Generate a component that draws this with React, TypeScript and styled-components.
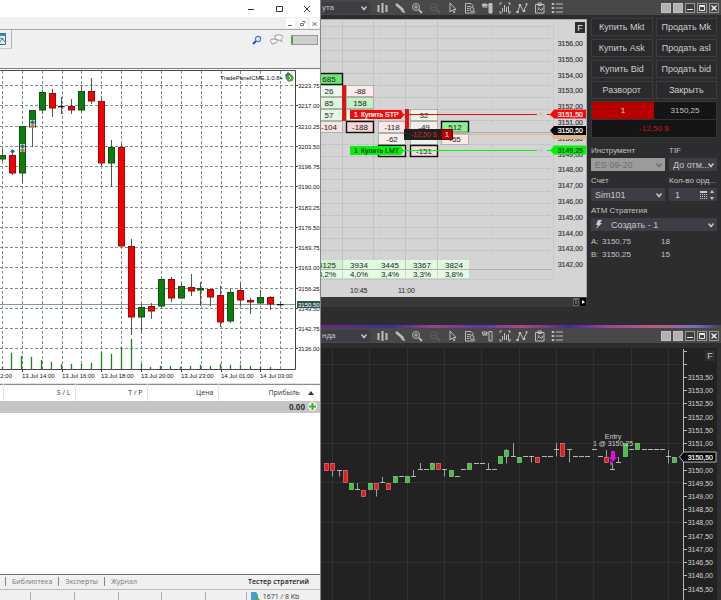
import React from "react";
import styled, { createGlobalStyle } from "styled-components";

const GlobalStyle = createGlobalStyle`
  *, *::before, *::after { box-sizing: border-box; }
  body { margin: 0; background: #2d2d2f; font-family: "Liberation Sans", Arial, sans-serif; }
  button, select, input { font: inherit; color: inherit; margin: 0; padding: 0; border: 0; border-radius: 0; }
  svg { display: block; }
`;

const Desktop = styled.main`
  display: grid;
  grid-template-columns: minmax(0, 321fr) minmax(0, 400fr);
  min-height: 100vh;
`;

/* ---------- Light terminal ---------- */

const Terminal = styled.section`
  display: flex;
  flex-direction: column;
  min-width: 0;
  background: #fff;
  border-right: 1px solid #85878a;
  font: 7px/12px "Open Sans", "Noto Sans", sans-serif;
  color: #333;
`;

const TitleBar = styled.header`
  display: flex;
  justify-content: flex-end;
  gap: 16px;
  height: 17px;
  padding: 1px 7px 0 0;
`;

const CaptionButton = styled.button`
  display: grid;
  place-items: center;
  width: 12px;
  background: none;
`;

const MenuBar = styled.div`
  display: flex;
  justify-content: flex-end;
  gap: 3px;
  height: 13px;
  padding: 1px 1px 1px 0;
  background: #f0f0f0;
  border-bottom: 1px solid #a8a8a8;
`;

const ChildButton = styled.button`
  display: grid;
  place-items: center;
  width: 9px;
  background: #fff;
`;

const ToolRow = styled.div`
  display: flex;
  justify-content: space-between;
  align-items: flex-start;
  height: 38px;
  background: #f0f0f0;
`;

const ToolGroup = styled.div`
  display: flex;
  align-items: center;
  width: 12px;
  height: 19px;
  border-right: 1px solid #b0b0b0;
  border-bottom: 1px solid #c8c8c8;
`;

const PlainButton = styled.button`
  background: none;
`;

const ToolRight = styled.div`
  display: flex;
  align-items: center;
  gap: 7px;
  padding: 4px 2px 0 0;
`;

const Gauge = styled.div`
  width: 27px;
  height: 10px;
  background: #cfcfcf;
  border: 1px solid #9a9a9a;
  border-left: 2px solid #5aa04f;
`;

const ChartArea = styled.div`
  height: 316px;
  border-top: 1px solid #77797a;
  border-bottom: 1px solid #e2e2e2;
  svg { width: 100%; height: 100%; }
`;

const TradeTable = styled.table`
  width: 100%;
  border-collapse: collapse;
  table-layout: fixed;
  border-top: 1px solid #8b8b8b;
  th {
    height: 16px;
    padding: 0 4px 0 0;
    font-weight: 400;
    text-align: right;
    border-right: 1px solid #e3e3e3;
    white-space: nowrap;
  }
  th:last-child { padding-right: 6px; border: 0; }
  td {
    height: 12px;
    padding: 0 3px 0 0;
    background: #c5c5c5;
    font-size: 8px;
    font-weight: 700;
    text-align: right;
  }
`;

const HeadLabel = styled.span`
  display: flex;
  justify-content: flex-end;
  align-items: center;
  gap: 8px;
`;

const Total = styled.span`
  display: flex;
  justify-content: flex-end;
  align-items: center;
  gap: 3px;
  line-height: 12px;
`;

const Filler = styled.div`
  flex: 1;
`;

const Tabs = styled.nav`
  display: flex;
  align-items: center;
  height: 15px;
  padding: 0 11px 1px 5px;
  background: #f0f0f0;
  border-top: 1px solid #6e6e6e;
`;

const Tab = styled.button<{ $active?: boolean }>`
  padding: 0 ${(p) => (p.$active ? 0 : 6)}px;
  background: none;
  border-left: ${(p) => (p.$active ? "0" : "1px solid #888")};
  margin-left: ${(p) => (p.$active ? "auto" : "0")};
  line-height: 9px;
  color: ${(p) => (p.$active ? "#222" : "#777")};
  font-weight: ${(p) => (p.$active ? 600 : 400)};
`;

const StatusBar = styled.footer`
  display: grid;
  grid-template-columns: 31fr 44fr 44fr 42fr 44fr 41fr 73fr;
  height: 11px;
  padding-top: 2px;
  background: #f0f0f0;
  border-top: 1px solid #bdbdbd;
  line-height: 10px;
  overflow: hidden;
`;

const StatusCell = styled.div`
  display: flex;
  gap: 3px;
  padding-left: 3px;
  border-right: 1px solid #aaa;
  white-space: nowrap;
  &:last-child { border: 0; }
`;

type Candle = [number, number, number, number, number, "g" | "r" | "k"];

const dayCandles: Candle[] = [
  [2, 149, 155, 159, 161, "g"], [12, 151, 155, 173, 175, "r"], [22, 126, 126, 173, 183, "g"],
  [32, 110, 110, 127, 147, "g"], [42, 90, 92, 110, 114, "g"], [52, 89, 93, 108, 117, "r"],
  [61, 97, 106, 107, 114, "k"], [71, 99, 106, 110, 114, "r"], [81, 86, 91, 110, 112, "g"],
  [91, 78, 91, 101, 104, "r"], [101, 97, 101, 163, 166, "r"], [111, 140, 147, 163, 187, "g"],
  [121, 144, 147, 246, 246, "r"], [131, 239, 246, 317, 335, "r"], [141, 304, 307, 317, 333, "g"],
  [151, 303, 306, 311, 319, "r"], [161, 278, 279, 306, 308, "g"], [171, 277, 279, 298, 302, "r"],
  [181, 283, 286, 298, 299, "g"], [191, 274, 287, 291, 296, "r"], [200, 282, 288, 290, 306, "g"],
  [210, 289, 289, 297, 306, "r"], [220, 286, 295, 322, 327, "r"], [230, 289, 292, 321, 323, "g"],
  [240, 283, 290, 300, 306, "r"], [250, 298, 300, 302, 314, "r"], [260, 290, 297, 303, 304, "g"],
  [270, 296, 297, 304, 310, "r"], [280, 302, 304, 304, 306, "k"],
];
const candleFill = { g: "#0a800a", r: "#f80000", k: "#111" };

const volumes = [2, 16, 13, 12, 9, 7, 5, 5, 5, 6, 17, 15, 22, 30, 5, 2, 3, 3, 2, 3, 4, 3, 5, 4, 4, 3, 2, 2];
const dayPrices = Array.from({ length: 14 }, (_, i) => (3223.75 - 6.75 * i).toFixed(2));
const dayTimes = ["13 Jul 14:00", "13 Jul 16:00", "13 Jul 18:00", "13 Jul 20:00", "13 Jul 23:00", "14 Jul 01:00", "14 Jul 03:00"];

function DayChart() {
  return (
    <svg viewBox="0 69 320 314" preserveAspectRatio="xMinYMin meet" fontFamily="'Liberation Sans', Arial, sans-serif" fontSize="6">
      <g stroke="#7b8f8f" strokeDasharray="3 2">
        {Array.from({ length: 15 }, (_, i) => {
          const x = Math.round(2 + i * 19.87) + 0.5;
          return <line key={i} x1={x} x2={x} y1="71" y2="369" />;
        })}
        {dayPrices.map((p, i) => {
          const y = Math.round(85 + i * 20.25) + 0.5;
          return <line key={p} x1="0" x2="295" y1={y} y2={y} />;
        })}
      </g>
      <path d="M0 70.5H295.5V369.5H0" fill="none" stroke="#444" />
      <path d="M0 304.5H295" stroke="#8a9a9a" />
      {volumes.map((v, i) => (
        <rect key={i} x={Math.round(1.5 + i * 9.93)} y={369 - v} width="1" height={v} fill="#148a14" stroke="#148a14" strokeWidth=".3" />
      ))}
      {dayCandles.map(([x, h, t, b, l, c]) => (
        <g key={x}>
          <path d={`M${x + 0.5} ${h}V${l}`} stroke="#555" />
          <rect x={x - 2.5} y={t + 0.5} width="6" height={Math.max(b - t - 0.5, 0.5)} fill={candleFill[c]} stroke={c === "r" ? "#8d1010" : c === "g" ? "#174d17" : "#111"} strokeWidth={c === "k" ? 0.6 : 1} />
        </g>
      ))}
      {[[12, 151], [22, 146], [32, 122]].map(([x, y]) => (
        <g key={x}>
          {x > 12 && <rect x={x - 2} y={y - 2} width="5" height="8" fill="#cfd8cf" />}
          <path d={`M${x + 0.5} ${y - 2}l2.5 2.5-2.5 2-2.5-2z`} fill="#256a9c" />
          {x > 12 && <path d={`M${x + 0.5} ${y + 2}l2.5 2.5-2.5 2-2.5-2z`} fill="#cc6a32" />}
        </g>
      ))}
      {dayPrices.map((p, i) => {
        const y = Math.round(85 + i * 20.25);
        return (
          <g key={p}>
            <path d={`M295 ${y + 0.5}h3`} stroke="#444" />
            <text x="298" y={y + 3} fill="#111">{p}</text>
          </g>
        );
      })}
      <rect x="297" y="301" width="23" height="7" fill="#2f5353" />
      <text x="298" y="307" fill="#fff">3150.50</text>
      <text x="-3" y="378" fill="#111">12:00</text>
      {dayTimes.map((t, i) => {
        const x = Math.round(22 + i * 39.74);
        return (
          <g key={t}>
            <path d={`M${x + 0.5} 369v3`} stroke="#444" />
            <text x={x} y="378" fill="#111">{t}</text>
          </g>
        );
      })}
      <text x="283" y="80" textAnchor="end" fill="#111">TradePanelCME.1.0.8+</text>
      <path d="M285 75l3-3 3 2 1 4-3 4-3-3z" fill="#667" />
      <circle cx="290" cy="78" r="3.6" fill="#4fa53a" />
      <path d="M289 76l2 2-2 2" stroke="#fff" fill="none" />
    </svg>
  );
}

function LightTerminal() {
  return (
    <Terminal>
      <TitleBar>
        <CaptionButton aria-label="Свернуть"><svg width="8" height="8" stroke="#333"><path d="M1 4.5h6" /></svg></CaptionButton>
        <CaptionButton aria-label="Развернуть"><svg width="8" height="8" stroke="#333" fill="none"><path d="M1.500 1.500h6v5h-6z" /></svg></CaptionButton>
        <CaptionButton aria-label="Закрыть окно"><svg width="8" height="8" stroke="#333"><path d="M1 1l6 6M7 1L1 7" /></svg></CaptionButton>
      </TitleBar>
      <MenuBar>
        <ChildButton aria-label="Свернуть график"><svg width="7" height="7" stroke="#567"><path d="M1 5.500h4" /></svg></ChildButton>
        <ChildButton aria-label="Восстановить график"><svg width="7" height="7" stroke="#678" fill="none"><path d="M3 1.500h3v2M1.500 3.500h3v2h-3z" /></svg></ChildButton>
        <ChildButton aria-label="Закрыть график"><svg width="7" height="7" stroke="#567"><path d="M1.500 2l4 4M5.500 2l-4 4" /></svg></ChildButton>
      </MenuBar>
      <ToolRow>
        <ToolGroup>
          <PlainButton aria-label="Шаблон">
            <svg width="7" height="12"><path d="M0 .5h5.500v11H0" fill="#dfeef2" stroke="#3d6f8c" /><path d="M0 1h5v2H0z" fill="#4388b5" /><path d="M0 9l2-3 3 3M0 5l4 1" stroke="#4e8c68" fill="none" /></svg>
          </PlainButton>
        </ToolGroup>
        <ToolRight>
          <PlainButton aria-label="Поиск">
            <svg width="10" height="10" fill="none"><circle cx="6" cy="4" r="2.600" stroke="#4e79c8" fill="#e8f1ff" strokeWidth="1.200" /><path d="M4 6L1 9" stroke="#2452b8" strokeWidth="2" /></svg>
          </PlainButton>
          <PlainButton aria-label="Чат">
            <svg width="15" height="11" fill="#fafafa" stroke="#999"><path d="M6 1.500q4-1.500 7 0 2 2-1 4l1 2-3-1.500q-3 0-4-1.500z" /><path d="M2 5.500q3-1 6 0 1 2-1 3.500H5l-2 1.500V9q-3-1-1-3.500z" /></svg>
          </PlainButton>
          <Gauge />
        </ToolRight>
      </ToolRow>
      <ChartArea><DayChart /></ChartArea>
      <TradeTable>
        <colgroup><col width="3" /><col width="72" /><col width="72" /><col width="71" /><col /></colgroup>
        <thead>
          <tr>
            <th />
            <th>S / L</th>
            <th>T / P</th>
            <th>Цена</th>
            <th><HeadLabel>Прибыль<svg width="6" height="4"><path d="M0 4l3-4 3 4z" fill="#333" /></svg></HeadLabel></th>
          </tr>
        </thead>
        <tbody>
          <tr>
            <td colSpan={5}>
              <Total>0.00
                <svg width="9" height="9"><circle cx="4.500" cy="4.500" r="4.500" fill="#f1f8ee" /><path d="M4.500 1v7M1 4.500h7" stroke="#43b02a" strokeWidth="2" /></svg>
              </Total>
            </td>
          </tr>
        </tbody>
      </TradeTable>
      <Filler />
      <Tabs>
        <Tab>Библиотека</Tab>
        <Tab>Эксперты</Tab>
        <Tab>Журнал</Tab>
        <Tab $active>Тестер стратегий</Tab>
      </Tabs>
      <StatusBar>
        {[0, 1, 2, 3, 4, 5].map((n) => <StatusCell key={n} />)}
        <StatusCell>
          <svg width="10" height="9"><path d="M1 0h5l2 3v6H1z" fill="#3f9fd6" /><path d="M4 8l3-3 3 3v1H4z" fill="#4fb03e" /></svg>
          1671 / 8 Kb
        </StatusCell>
      </StatusBar>
    </Terminal>
  );
}

/* ---------- Dark platform ---------- */

const Platform = styled.section`
  display: flex;
  flex-direction: column;
  min-width: 0;
  background: #2d2d2f;
  color: #c4c4c4;
  font-size: 8px;
  line-height: 10px;
`;

const Toolbar = styled.div`
  display: flex;
  align-items: center;
  justify-content: space-between;
  height: 15px;
  padding-right: 2px;
  background: #484848;
`;

const ToolbarTools = styled.div`
  display: flex;
  align-items: center;
`;

const Field = styled.div<{ $tone?: "disabled" | "toolbar" }>`
  position: relative;
  display: flex;
  align-items: center;
  min-width: 0;
  height: ${(p) => (p.$tone === "toolbar" ? 12 : 13)}px;
  width: ${(p) => (p.$tone === "toolbar" ? "49px" : "100%")};
  margin-right: ${(p) => (p.$tone === "toolbar" ? "3px" : "0")};
  background: ${(p) => (p.$tone === "disabled" ? "#9b9b9b" : "#3e3d45")};
  color: ${(p) => (p.$tone === "disabled" ? "#707070" : "#c8c8c8")};
  font-size: ${(p) => (p.$tone === "toolbar" ? "8px" : "9px")};
  select {
    appearance: none;
    width: 100%;
    height: 100%;
    padding-left: ${(p) => (p.$tone === "toolbar" ? 1 : 4)}px;
    background: none;
    color: inherit;
    opacity: 1;
  }
`;

const Chevron = styled.svg`
  position: absolute;
  right: 3px;
  pointer-events: none;
`;

function Select({ label, value, tone, icon, id }: { label: string; value: string; tone?: "disabled" | "toolbar"; icon?: React.ReactNode; id?: string }) {
  return (
    <Field $tone={tone}>
      {icon}
      <select id={id} aria-label={id ? undefined : label} disabled={tone === "disabled"}>
        <option>{value}</option>
      </select>
      <Chevron width="6" height="6" fill="none" stroke="currentColor" strokeWidth="1.500"><path d="M.5 1.500l2.500 3 2.500-3" /></Chevron>
    </Field>
  );
}

const IconButton = styled.button<{ $dim?: boolean }>`
  display: grid;
  place-items: center;
  width: 17px;
  height: 13px;
  background: none;
  color: ${(p) => (p.$dim ? "#606060" : "#bdbdbd")};
  &:nth-child(2n) { width: 18px; }
`;

const tools: [string, React.ReactNode][] = [
  ["Бары", <path key="p" d="M2.500 3v7M6.500 1v10M10.500 3v7" strokeWidth="2" />],
  ["Рисование", <g key="p"><path d="M2 2l7 6" strokeWidth="2.600" /><path d="M9 7l2 4-4-2" fill="currentColor" strokeWidth=".5" /></g>],
  ["Увеличить", <g key="p"><circle cx="5" cy="5" r="3.500" /><path d="M8 8l3 3" strokeWidth="1.800" /><path d="M3 5h4M5 3v4" /></g>],
  ["Уменьшить", <g key="p"><circle cx="5" cy="5" r="3.500" /><path d="M8 8l3 3" strokeWidth="1.800" /><path d="M3 5h4" /></g>],
  ["Курсор", <path key="p" d="M4 1v9l2-2 2 3 1-1-1.500-2.500H10z" />],
  ["Данные", <g key="p"><path d="M10 11H1.500V1.500H7L9 3.500V5M3 4.500h4M3 6.500h2M3 8.500h2" /><circle cx="8" cy="7.500" r="2" /><path d="M9.500 9l2 2" /></g>],
  ["Панель", <path key="p" d="M8 1.500h3v9.500H8zM1.500 2h4v2h-4zM1.500 5h5M5 3h3" />],
  ["Индикаторы", <g key="p"><path d="M1 3V1h2M9 1h2v2M1 9v2h2M9 11h2V9" /><path d="M3.500 6v4M5.500 3v7M7.500 5v5M9.500 4v6" /></g>],
  ["Стратегии", <path key="p" d="M1.500 10L4 3l3.500 6L11 2M.5 9.500h2v1h-2zM3 2.500h2v1H3zM7 8.500h2v1H7zM10 1.500h1v1h-1z" />],
  ["Отчёт", <path key="p" d="M1.500 2.500h8.500v8.500H1.500zM4 1h3.500v2.500H4zM3.500 8.500l2-2 2 2 1.500-3M3.500 6h2" />],
  ["Свойства", <path key="p" d="M1 1.500h2v1H1zM1 5.500h2v1H1zM1 9.500h2v1H1zM5 2h7M5 6h7M5 10h7" />],
];

const WindowButtons = styled.div`
  display: flex;
  gap: 2px;
`;

const WindowButton = styled.button<{ $solid?: boolean }>`
  display: grid;
  place-items: center;
  width: 10px;
  height: 10px;
  background: ${(p) => (p.$solid ? "#b5b1b3" : "#3d3d3d")};
  border: 1px solid ${(p) => (p.$solid ? "#c5c2c4" : "#999")};
  color: #eee;
`;

function PlatformToolbar({ interval, panelOn }: { interval: string; panelOn?: boolean }) {
  return (
    <Toolbar>
      <ToolbarTools>
        <Select label="Интервал" value={interval} tone="toolbar" />
        {tools.map(([name, art], i) => (
          <IconButton key={name} aria-label={name} $dim={i === 3}>
            <svg width="12" height="12" fill={panelOn && i === 6 ? "currentColor" : "none"} stroke="currentColor">{art}</svg>
          </IconButton>
        ))}
      </ToolbarTools>
      <WindowButtons>
        <WindowButton $solid aria-label="Связь инструмента" />
        <WindowButton $solid aria-label="Связь интервала" />
        <WindowButton aria-label="Свернуть"><svg width="8" height="8" stroke="currentColor"><path d="M1 5.500h6" /></svg></WindowButton>
        <WindowButton aria-label="Развернуть"><svg width="8" height="8" stroke="currentColor" fill="none"><path d="M1.500 2.500h5v4h-5zM1 1.500h6" /></svg></WindowButton>
        <WindowButton aria-label="Закрыть окно"><svg width="8" height="8" stroke="currentColor" strokeWidth="1.500"><path d="M1.500 1.500l5 5M6.500 1.500l-5 5" /></svg></WindowButton>
      </WindowButtons>
    </Toolbar>
  );
}

const Split = styled.div`
  display: grid;
  grid-template-columns: minmax(0, 266fr) minmax(0, 134fr);
  height: 310px;
`;

const FootprintPane = styled.div`
  padding-top: 4px;
  background: #2d2d2f;
`;

const FootprintCanvas = styled.div`
  height: 278px;
  background: #d4d4d4;
  border-top: 1px solid #aaa;
  border-right: 1px solid #aaa;
  svg { width: 100%; height: 100%; }
`;

const ScrollStrip = styled.div`
  display: flex;
  justify-content: flex-end;
  align-items: center;
  gap: 1px;
  height: 10px;
  padding-right: 1px;
  background: #393939;
`;

const StripButton = styled.button<{ $dark?: boolean }>`
  display: grid;
  place-items: center;
  width: 6px;
  height: 8px;
  background: ${(p) => (p.$dark ? "#000" : "#666")};
  color: ${(p) => (p.$dark ? "#fff" : "#222")};
`;

type Cell = [number, number, string, string, boolean?];
const columns = [316, 346, 378, 410, 441];
const cells: Cell[] = [
  [0, 0, "685", "#6fe476", true], [0, 1, "26", "#ecf8ec"], [0, 2, "85", "#dcf5dc"], [0, 3, "57", "#e4f8e4"], [0, 4, "-104", "#fbe2e2"],
  [1, 1, "-88", "#fdeaea"], [1, 2, "158", "#c4f0c6"], [1, 3, "", "#e6f5e6"], [1, 4, "-188", "#f6d5d5", true],
  [2, 4, "-118", "#fce6e6"], [2, 5, "-62", "#fbeeee"], [2, 6, "", "#f8dede", true],
  [3, 3, "32", "#edf5e8"], [3, 4, "-49", "#f8eded"], [3, 5, "", "#e9f5e7"], [3, 6, "-151", "#f3dddd", true],
  [4, 4, "512", "#90ee94", true], [4, 5, "-55", "#fce8e8"],
];

function OrderLine({ y, color, label, price, dark }: { y: number; color: string; label: string; price: string; dark?: boolean }) {
  const ink = dark ? "#04401a" : "#fff";
  return (
    <g>
      <path d={`M403 ${y + 0.5}H537M547 ${y + 0.5}h5`} stroke={color} />
      <path d={`M539 ${y - 2}l4 4M543 ${y - 2}l-4 4`} stroke="#c0c0c0" />
      <path d={`M350 ${y - 4}h51l3 5-3 4h-51z`} fill={color} />
      <path d={`M550 ${y + 0.5}l4-5h33v9h-33z`} fill={color} />
      <g fontSize="7" fill={ink} stroke={ink} strokeWidth=".2">
        <text x="354" y={y + 3}>1</text>
        <text x="361" y={y + 3}>{label}</text>
        <text x="583" y={y + 3} textAnchor="end">{price}</text>
      </g>
    </g>
  );
}

function FootprintChart() {
  return (
    <svg viewBox="321 19 265 277" preserveAspectRatio="xMinYMin meet" fontFamily="'Liberation Sans', Arial, sans-serif">
      <g stroke="#c2c2c2">
        {[342, 373, 405, 437].map((x) => <path key={x} d={`M${x + 0.5} 20V268`} />)}
        {Array.from({ length: 20 }, (_, i) => (
          <path key={i} d={`M321 ${Math.round(25 + i * 11.8) + 0.5}H552`} strokeDasharray="6 1" />
        ))}
      </g>
      <path d="M321 268.500H552" stroke="#b0b0b0" />
      <path d="M553.500 20V278.500H321" stroke="#c8c8c8" fill="none" />
      {cells.map(([c, r, t, fill, bold], i) => (
        <g key={i}>
          <rect x={columns[c] + 0.5} y={72.5 + r * 12} width={c ? 27 : 26} height="11" fill={fill} stroke={bold ? "#111" : "#aab4aa"} strokeWidth={bold ? 1.4 : 1} />
          <text x={columns[c] + (c ? 14 : 13)} y={81 + r * 12} textAnchor="middle" fontSize="8" fill="#222">{t}</text>
        </g>
      ))}
      <path d="M342 84h4v36h-4zM405 108h4v23h-4z" fill="#de1313" />
      {[["4125", "4,2%"], ["3934", "4,0%"], ["3445", "3,4%"], ["3367", "3,3%"], ["3824", "3,8%"]].map(([v, p], i) => {
        const left = [311, 343, 374, 406, 438][i];
        return (
          <g key={v} fontSize="8" fill="#222" textAnchor="middle">
            <rect x={left} y="259" width="31" height="9" fill={i ? "#dffbdf" : "#cff3cf"} />
            <rect x={left} y="269" width="31" height="8" fill="#e3fce3" />
            <text x={left + 16} y="267">{v}</text>
            <text x={left + 16} y="276">{p}</text>
          </g>
        );
      })}
      <g fontSize="7" fill="#222">
        <text x="350" y="292">10:45</text>
        <text x="398" y="292">11:00</text>
      </g>
      <g fontSize="7" fill="#2b2b2b" stroke="#2b2b2b" strokeWidth=".1" textAnchor="end">
        {Array.from({ length: 15 }, (_, i) => (
          <text key={i} x="583" y={Math.round(45 + i * 15.8)}>{`${3156 - i},00`}</text>
        ))}
      </g>
      <path d="M452 131.500H552" stroke="#aaa" />
      <path d="M452 133.500H552" stroke="#ddb98a" />
      <path d="M550 134l4-4h33v8h-33z" fill="#e2b982" />
      <path d="M550 129.500l4-4.500h33v9h-33z" fill="#000" />
      <text x="583" y="132" fontSize="7" textAnchor="end" fill="#fff" stroke="#fff" strokeWidth=".2">3150,50</text>
      <OrderLine y={113} color="#f50a0a" label="Купить STP" price="3151,50" />
      <OrderLine y={149} color="#08f00c" label="Купить LMT" price="3149,25" dark />
      <path d="M404 128h38v11h-38z" fill="#202022" />
      <path d="M441.500 128.500h11v10h-11z" fill="#b40000" stroke="#7a0000" />
      <text x="411" y="136" fontSize="7" fill="#e02020">-12,50 $</text>
      <text x="447" y="136" fontSize="7" fill="#fff" textAnchor="middle">1</text>
      <rect x="575" y="21" width="10" height="11" fill="#2c2c2c" />
      <text x="580" y="30" fontSize="9" fill="#eee" textAnchor="middle">F</text>
    </svg>
  );
}

const OrderPanel = styled.form`
  display: flex;
  flex-direction: column;
  padding: 3px 4px 0;
  background: #2d2d2f;
`;

const ActionGrid = styled.div`
  display: grid;
  grid-template-columns: repeat(2, minmax(0, 1fr));
  gap: 3px;
`;

const ActionButton = styled.button`
  height: 18px;
  overflow: hidden;
  background: #2a2a2c;
  border: 1px solid #3d3d40;
  color: #cecece;
  font-size: 9px;
  white-space: nowrap;
`;

const Position = styled.div`
  display: grid;
  grid-template-columns: repeat(2, minmax(0, 1fr));
  margin-top: 2px;
  border: 1px solid #38383a;
  background: #151515;
  font-size: 8px;
  line-height: 17px;
  text-align: center;
`;

const Quantity = styled.span`
  background: #b80000;
  color: #ddd;
`;

const Profit = styled.span`
  grid-column: 1 / -1;
  border-top: 1px solid #333;
  color: #cc1717;
`;

const FieldGrid = styled.div`
  display: grid;
  grid-template-columns: minmax(0, 74fr) minmax(0, 48fr);
  column-gap: 4px;
  margin-top: 8px;
`;

const Label = styled.label`
  height: 12px;
  overflow: hidden;
  white-space: nowrap;
`;

const FieldCell = styled.div`
  display: flex;
  flex-direction: column;
  min-width: 0;
  height: 30px;
`;

const CountField = styled(Field)`
  input { width: 20px; padding-left: 6px; background: none; }
  svg { margin-left: auto; margin-right: 2px; }
`;

const IconSlot = styled.span`
  display: grid;
  place-items: center;
  flex: 0 0 16px;
`;

const Quotes = styled.dl`
  display: grid;
  grid-template-columns: 11px 59px auto;
  row-gap: 3px;
  margin: 6px 0 0;
  dt, dd { margin: 0; }
`;

function Orders() {
  return (
    <OrderPanel onSubmit={(e) => e.preventDefault()}>
      <ActionGrid>
        {["Купить Mkt", "Продать Mk", "Купить Ask", "Продать asl", "Купить Bid", "Продать bid", "Разворот", "Закрыть"].map((t) => (
          <ActionButton type="button" key={t}>{t}</ActionButton>
        ))}
      </ActionGrid>
      <Position>
        <Quantity>1</Quantity>
        <span>3150,25</span>
        <Profit>-12,50 $</Profit>
      </Position>
      <FieldGrid>
        <FieldCell><Label htmlFor="instrument">Инструмент</Label><Select id="instrument" label="Инструмент" value="ES 09-20" tone="disabled" /></FieldCell>
        <FieldCell><Label htmlFor="tif">TIF</Label><Select id="tif" label="TIF" value="До отм..." /></FieldCell>
        <FieldCell><Label htmlFor="account">Счет</Label><Select id="account" label="Счет" value="Sim101" /></FieldCell>
        <FieldCell>
          <Label htmlFor="count">Кол-во орд...</Label>
          <CountField>
            <input id="count" defaultValue="1" />
            <svg width="16" height="10" fill="#c8c8c8"><path d="M1 1h7v2H1zM1 4h1v1H1zM3 4h1v1H3zM5 4h1v1H5zM7 4h1v1H7zM1 6h1v1H1zM3 6h1v1H3zM5 6h1v1H5zM7 6h1v1H7zM1 8h1v1H1zM3 8h1v1H3zM5 8h1v1H5zM7 8h1v1H7z" /><path d="M11 3l2-3 2 3zM11 7l2 3 2-3z" /></svg>
          </CountField>
        </FieldCell>
      </FieldGrid>
      <Label htmlFor="atm">ATM Стратегия</Label>
      <Select id="atm" label="ATM Стратегия" value="Создать - 1" icon={<IconSlot><svg width="8" height="9" fill="#ccc"><path d="M3 0h4L5 3h2L1 9l2-4H1z" /></svg></IconSlot>} />
      <Quotes>
        <dt>A:</dt><dd>3150,75</dd><dd>18</dd>
        <dt>B:</dt><dd>3150,25</dd><dd>15</dd>
      </Quotes>
    </OrderPanel>
  );
}

const Wallpaper = styled.div`
  height: 3px;
  background: linear-gradient(90deg, #6b2c78, #3c3292 18%, #a04088 28%, #563da0 40%, #b4457c 50%, #442c94 62%, #9d4496 72%, #b85f83 85%, #6d6fc4 94%, #444);
`;

const NightPane = styled.div`
  flex: 1;
  min-height: 252px;
  margin-top: 5px;
  background: #222;
  svg { width: 100%; height: 100%; }
`;

type Tick = [number, number, number, number, number, string];
/* x, high, open/close top, open/close bottom, low, kind */
const nightTicks: Tick[] = [
  [326, 463, 463, 470, 470, "r"], [332, 463, 463, 470, 476, "r"], [339, 470, 470, 470, 476, "k"], [345, 470, 470, 482, 482, "r"],
  [351, 483, 483, 489, 489, "g"], [357, 483, 489, 489, 489, "k"], [363, 490, 490, 496, 496, "r"], [370, 483, 483, 489, 489, "g"],
  [376, 483, 483, 489, 496, "r"], [382, 477, 482, 482, 482, "k"], [388, 483, 483, 489, 489, "r"], [395, 476, 476, 482, 482, "g"],
  [401, 476, 476, 476, 476, "k"], [407, 476, 476, 482, 482, "g"], [413, 470, 476, 476, 476, "k"], [420, 463, 469, 469, 469, "k"],
  [426, 469, 469, 469, 469, "k"], [432, 463, 463, 469, 469, "g"], [438, 463, 463, 469, 469, "r"], [444, 469, 469, 469, 476, "k"],
  [451, 470, 470, 476, 476, "g"], [457, 476, 476, 476, 476, "k"], [463, 469, 469, 469, 469, "k"], [469, 463, 463, 469, 469, "g"],
  [476, 463, 463, 463, 463, "k"], [482, 463, 463, 463, 463, "k"], [488, 463, 469, 469, 469, "k"], [494, 469, 469, 469, 469, "k"],
  [500, 456, 456, 463, 463, "g"], [506, 449, 450, 456, 463, "g"], [513, 443, 456, 456, 456, "k"], [519, 457, 457, 462, 462, "g"],
  [525, 456, 456, 456, 456, "k"], [531, 456, 456, 456, 462, "k"], [537, 457, 457, 462, 462, "r"], [544, 456, 456, 456, 456, "k"],
  [550, 456, 456, 456, 456, "k"], [556, 443, 449, 449, 456, "k"], [562, 443, 443, 456, 456, "r"], [569, 449, 449, 449, 462, "k"],
  [575, 456, 456, 456, 456, "k"], [581, 456, 456, 456, 456, "k"], [587, 456, 456, 456, 456, "k"], [594, 449, 449, 449, 449, "k"],
  [600, 456, 456, 456, 456, "k"], [606, 450, 457, 462, 462, "r"], [612, 463, 469, 469, 469, "k"], [618, 457, 462, 462, 462, "k"],
  [625, 443, 443, 456, 456, "g"], [631, 449, 449, 449, 449, "k"], [637, 443, 443, 449, 449, "g"], [644, 449, 449, 449, 449, "k"],
  [650, 449, 449, 449, 449, "k"], [656, 449, 449, 449, 449, "k"], [662, 449, 449, 449, 449, "k"], [668, 450, 456, 456, 463, "k"],
  [674, 457, 457, 462, 462, "g"],
];

function NightChart() {
  return (
    <svg viewBox="321 348 400 252" preserveAspectRatio="xMaxYMin slice" fontFamily="'Liberation Sans', Arial, sans-serif" fontSize="7">
      <g stroke="#303030">
        {Array.from({ length: 10 }, (_, i) => <path key={i} d={`M${Math.round(332 + i * 37.35) + 0.5} 348V600`} />)}
        {[364, 403, 443, 482, 522, 562].map((y) => <path key={y} d={`M321 ${y + 0.5}H683`} />)}
      </g>
      {nightTicks.map(([x, h, t, b, l, k]) => (
        <g key={x}>
          {l > h && <path d={`M${x + 0.5} ${h}V${l + 0.5}`} stroke="#a0a0a0" />}
          {k === "k"
            ? <path d={`M${x - 2} ${t + 0.5}h5`} stroke="#b8b8b8" />
            : <rect x={x - 1.5} y={t + 0.5} width="4" height={b - t} fill={k === "g" ? "#3cc83c" : "#ee1818"} stroke={k === "g" ? "#93c493" : "#c98080"} strokeWidth=".7" />}
        </g>
      ))}
      <g fill="#d0d0d0" textAnchor="middle">
        <text x="613" y="439">Entry</text>
        <text x="613" y="446">1 @ 3150,25</text>
      </g>
      <path d="M611 451h4v6h2l-4 5-4-5h2zM610 460l3 3-3 3z" fill="#e010e0" />
      <path d="M683.500 349V600" stroke="#b8b8b8" />
      <path d="M684 351.500h3M684 364.500h3" stroke="#b8b8b8" />
      {Array.from({ length: 17 }, (_, i) => {
        const y = Math.round(377 + i * 13.22);
        return (
          <g key={i}>
            <path d={`M684 ${y + 0.5}h3`} stroke="#b8b8b8" />
            {i !== 6 && <text x="713" y={y + 3} textAnchor="end" fill="#d4d4d4">{(3153.5 - i * 0.5).toFixed(2).replace(".", ",")}</text>}
          </g>
        );
      })}
      <path d="M679.500 457l4-5h32.500v10h-32.500z" fill="#000" stroke="#bbb" />
      <text x="713" y="460" textAnchor="end" fill="#fff" stroke="#fff" strokeWidth=".2">3150,50</text>
      <rect x="717" y="348" width="4" height="252" fill="#303032" />
      <rect x="705" y="350" width="10" height="11" fill="#2d2d33" />
      <text x="710" y="359" fontSize="9" textAnchor="middle" fill="#ccc">F</text>
    </svg>
  );
}

export default function App() {
  return (
    <>
      <GlobalStyle />
      <Desktop>
        <LightTerminal />
        <Platform>
          <PlatformToolbar interval="ута" panelOn />
          <Split>
            <FootprintPane>
              <FootprintCanvas><FootprintChart /></FootprintCanvas>
              <ScrollStrip>
                <StripButton aria-label="Пауза"><svg width="4" height="6" stroke="currentColor"><path d="M.5 1v4M3.500 1v4M0 5.500h4" /></svg></StripButton>
                <StripButton $dark aria-label="Вперёд"><svg width="4" height="6" fill="currentColor"><path d="M1 1l3 2-3 2z" /></svg></StripButton>
              </ScrollStrip>
            </FootprintPane>
            <Orders />
          </Split>
          <Wallpaper />
          <PlatformToolbar interval="нда" />
          <NightPane><NightChart /></NightPane>
        </Platform>
      </Desktop>
    </>
  );
}
